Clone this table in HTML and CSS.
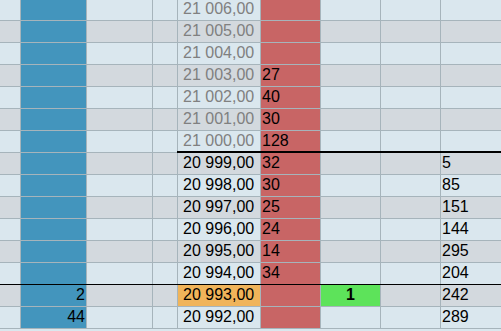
FILE: index.html
```html
<!DOCTYPE html>
<html lang="ru">
<head>
<meta charset="utf-8">
<title>Стакан</title>
<link rel="stylesheet" href="styles.css">
</head>
<body>
<div class="ladder">
  <div class="row light"><div></div><div class="bid"></div><div></div><div></div><div class="price ask-side">21 006,00</div><div class="ask"></div><div></div><div></div><div></div></div>
  <div class="row grey"><div></div><div class="bid"></div><div></div><div></div><div class="price ask-side">21 005,00</div><div class="ask"></div><div></div><div></div><div></div></div>
  <div class="row light"><div></div><div class="bid"></div><div></div><div></div><div class="price ask-side">21 004,00</div><div class="ask"></div><div></div><div></div><div></div></div>
  <div class="row grey"><div></div><div class="bid"></div><div></div><div></div><div class="price ask-side">21 003,00</div><div class="ask">27</div><div></div><div></div><div></div></div>
  <div class="row light"><div></div><div class="bid"></div><div></div><div></div><div class="price ask-side">21 002,00</div><div class="ask">40</div><div></div><div></div><div></div></div>
  <div class="row grey"><div></div><div class="bid"></div><div></div><div></div><div class="price ask-side">21 001,00</div><div class="ask">30</div><div></div><div></div><div></div></div>
  <div class="row light split"><div></div><div class="bid"></div><div></div><div></div><div class="price ask-side">21 000,00</div><div class="ask">128</div><div></div><div></div><div></div></div>
  <div class="row grey"><div></div><div class="bid"></div><div></div><div></div><div class="price">20 999,00</div><div class="ask">32</div><div></div><div></div><div class="vol">5</div></div>
  <div class="row light"><div></div><div class="bid"></div><div></div><div></div><div class="price">20 998,00</div><div class="ask">30</div><div></div><div></div><div class="vol">85</div></div>
  <div class="row grey"><div></div><div class="bid"></div><div></div><div></div><div class="price">20 997,00</div><div class="ask">25</div><div></div><div></div><div class="vol">151</div></div>
  <div class="row light"><div></div><div class="bid"></div><div></div><div></div><div class="price">20 996,00</div><div class="ask">24</div><div></div><div></div><div class="vol">144</div></div>
  <div class="row grey"><div></div><div class="bid"></div><div></div><div></div><div class="price">20 995,00</div><div class="ask">14</div><div></div><div></div><div class="vol">295</div></div>
  <div class="row light last-mark"><div></div><div class="bid"></div><div></div><div></div><div class="price">20 994,00</div><div class="ask">34</div><div></div><div></div><div class="vol">204</div></div>
  <div class="row grey"><div></div><div class="bid">2</div><div></div><div></div><div class="price current">20 993,00</div><div class="ask"></div><div class="order">1</div><div></div><div class="vol">242</div></div>
  <div class="row light"><div></div><div class="bid">44</div><div></div><div></div><div class="price">20 992,00</div><div class="ask"></div><div></div><div></div><div class="vol">289</div></div>
</div>
</body>
</html>
```

FILE: styles.css
```css
html, body {
  margin: 0;
  padding: 0;
  background: #dae7ee;
  overflow: hidden;
}

.ladder {
  margin-top: -1px;
  font-family: "Liberation Sans", Arial, sans-serif;
  font-size: 16px;
  color: #000;
}

.row {
  position: relative;
  display: grid;
  grid-template-columns: 20px 65px 65px 24px 82px 59px 59px 59px 1fr;
  column-gap: 1px;
  height: 21px;
  background: #a6b4bb;
  border-bottom: 1px solid #a6b4bb;
}

.row > div {
  height: 21px;
  line-height: 20px;
  white-space: nowrap;
  overflow: hidden;
}

.row.light > div { background: #dae7ee; }
.row.grey > div { background: #d3d9de; }

.row > div.bid {
  background: #4395bd;
  text-align: right;
  padding-right: 1px;
}

.row > div.ask {
  background: #c86565;
  padding-left: 1px;
}

.row > div.price {
  padding-left: 5px;
}

.row > div.ask-side { color: #808080; }

.row > div.current { background: #f0b45a; }

.row > div.order {
  background: #5de35a;
  text-align: center;
  font-weight: bold;
}

.row > div.vol { padding-left: 1px; }

/* best bid / best ask boundary */
.row.split::after {
  content: "";
  position: absolute;
  left: 177px;
  right: 0;
  bottom: -2px;
  height: 3px;
  background: #000;
}

/* last trade marker */
.row.last-mark { border-bottom-color: #000; }
```
